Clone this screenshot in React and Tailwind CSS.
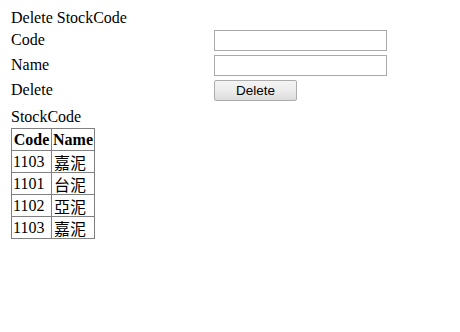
export default function App() {
  const rows = [
    ["1103", "嘉泥"],
    ["1101", "台泥"],
    ["1102", "亞泥"],
    ["1103", "嘉泥"],
  ];
  return (
    <div className="w-[460px] h-[332px] bg-white text-black pt-[8px] pl-[11px] font-['Liberation_Serif','Noto_Sans_CJK_TC',serif] text-[16px] leading-[18px]">
      <div className="h-[18px] pt-[1px] whitespace-nowrap">Delete StockCode</div>
      <div className="mt-[4px] flex flex-col">
        <div className="h-[25px] flex items-start">
          <div className="w-[203px] pt-[1px]">Code</div>
          <input className="w-[173px] h-[21px] border border-[#a9a9a9] bg-white outline-none" />
        </div>
        <div className="h-[25px] flex items-start">
          <div className="w-[203px] pt-[1px]">Name</div>
          <input className="w-[173px] h-[21px] border border-[#a9a9a9] bg-white outline-none" />
        </div>
        <div className="h-[25px] flex items-start">
          <div className="w-[203px] pt-[1px]">Delete</div>
          <button className="w-[83px] h-[21px] border border-[#acacac] rounded-[2px] bg-linear-to-b from-[#f4f4f4] via-[#ececec] to-[#dcdcdc] font-['Liberation_Sans',sans-serif] text-[13.5px] leading-[19px] text-black flex items-center justify-center">
            Delete
          </button>
        </div>
      </div>
      <div className="mt-[1px] h-[18px] pt-[2px]">StockCode</div>
      <div className="mt-[4px] w-[84px] border-l border-t border-[#808080] grid grid-cols-[40px_43px]">
        <div className="h-[22px] border-r border-b border-[#808080] font-bold flex items-center justify-center">Code</div>
        <div className="h-[22px] border-r border-b border-[#808080] font-bold flex items-center justify-center">Name</div>
        {rows.map(([c, n], i) => (
          <div key={i} className="contents">
            <div className="h-[22px] border-r border-b border-[#808080] pl-[1px] flex items-center">{c}</div>
            <div className="h-[22px] border-r border-b border-[#808080] pl-[2px] flex items-center font-['Noto_Sans_CJK_TC',sans-serif] leading-[18px]">{n}</div>
          </div>
        ))}
      </div>
    </div>
  );
}
